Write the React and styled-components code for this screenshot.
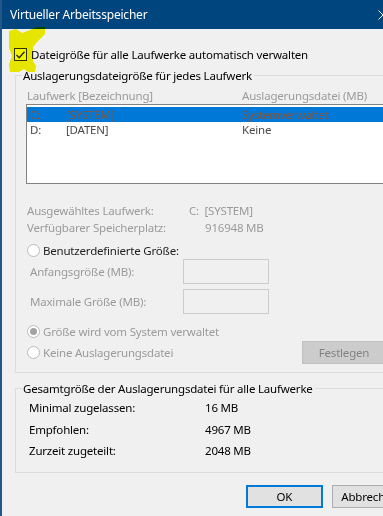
import React from 'react';
import styled, { createGlobalStyle } from 'styled-components';

// Page reset, dialog font
const GlobalStyle = createGlobalStyle`
    html, body {
        margin: 0;
        padding: 0;
        overflow: hidden;
        background: #f0f0f0;
    }
    body {
        font-family: "Noto Sans", "Segoe UI", sans-serif;
        font-size: 11.5px;
        letter-spacing: -0.2px;
    }
`;

const Window = styled.div`
    position: relative;
    width: 418px;
    height: 516px;
    background: #f0f0f0;
    border-left: 2px solid #24568a;
    display: flex;
    flex-direction: column;
    overflow: hidden;
    color: #000;
`;

const TitleBar = styled.div`
    height: 29px;
    flex: none;
    background: #00457d;
    color: #fff;
    display: flex;
    align-items: center;
    padding-left: 8px;
    font-size: 12px;
`;

const Close = styled.span`
    margin-left: auto;
    margin-right: 32px;
    display: flex;
`;

const Content = styled.div`
    padding: 0 12px 0 12px;
    display: flex;
    flex-direction: column;
`;

const CheckRow = styled.label`
    margin-top: 19px;
    height: 13px;
    display: flex;
    align-items: center;
    gap: 4px;
    line-height: 15px;
`;

const Box = styled.span`
    width: 11px;
    height: 11px;
    border: 1px solid #333;
    background: #fff;
    display: flex;
    align-items: center;
    justify-content: center;
`;

const Group = styled.fieldset`
    margin: ${(p) => p.$top}px 0 0 1px;
    padding: 0 0 ${(p) => p.$bottom}px ${(p) => p.$inset}px;
    border: 1px solid #dcdcdc;
    min-width: 0;
`;

const Legend = styled.legend`
    margin-left: ${(p) => 6 - p.$inset}px;
    padding: 0 2px 0 1px;
    line-height: 15px;
`;

const Columns = styled.div`
    padding-top: 5px;
    line-height: 15px;
    display: grid;
    grid-template-columns: 215px 1fr;
    color: #9b9b9b;
`;

const ListBox = styled.div`
    margin: 1px 0 0 -1px;
    height: 76px;
    border: 1px solid #828282;
    background: #fff;
    padding-top: 2px;
`;

const ListRow = styled.div`
    height: 15px;
    line-height: 15px;
    padding-left: 3px;
    display: grid;
    grid-template-columns: 36px 176px 1fr;
    background: ${(p) => (p.$selected ? '#0078d7' : 'transparent')};
    color: ${(p) => (p.$selected ? '#86573a' : '#4a4a4a')};
`;

const InfoBlock = styled.div`
    margin-top: 18px;
    display: grid;
    grid-template-columns: 162px 1fr;
    grid-auto-rows: 17px;
    line-height: 17px;
    color: #9b9b9b;
`;

const Value = styled.span`
    padding-left: ${(p) => p.$indent || 0}px;
`;

const RadioRow = styled.div`
    height: ${(p) => p.$height || 17}px;
    margin-top: ${(p) => p.$top || 0}px;
    display: flex;
    align-items: center;
    gap: 3px;
    color: ${(p) => (p.$enabled ? '#222' : '#9b9b9b')};
`;

const Circle = styled.span`
    width: 11px;
    height: 11px;
    border: 1px solid #bcbcbc;
    border-radius: 50%;
    background: #fff;
    display: flex;
    align-items: center;
    justify-content: center;
    &::after {
        content: '';
        width: 7px;
        height: 7px;
        border-radius: 50%;
        background: ${(p) => (p.$checked ? '#a3a3a3' : 'transparent')};
    }
`;

const SizeRow = styled.div`
    height: 25px;
    margin-top: ${(p) => p.$top || 0}px;
    padding-left: 3px;
    display: grid;
    grid-template-columns: 153px 86px;
    align-items: center;
    color: #9b9b9b;
`;

const SizeInput = styled.span`
    height: 23px;
    border: 1px solid #cccccc;
    background: #f0f0f0;
`;

const SetRow = styled.div`
    display: grid;
    grid-template-columns: 275px 84px;
    align-items: center;
`;

const Button = styled.button`
    width: 84px;
    height: 23px;
    font: inherit;
    letter-spacing: inherit;
    padding: 0;
    border: ${(p) => (p.$default ? '2px solid #0078d7' : '1px solid #adadad')};
    background: #e1e1e1;
    color: #000;
    &:disabled {
        background: #cccccc;
        border-color: #bfbfbf;
        color: #838383;
    }
`;

const TotalRow = styled.div`
    height: 21.5px;
    display: grid;
    grid-template-columns: 176px 1fr;
    align-items: center;
`;

const TotalsTop = styled.div`
    height: 1px;
`;

const ButtonRow = styled.div`
    margin-top: 12px;
    padding-left: 232px;
    display: flex;
    gap: 9px;
`;

// Yellow highlighter mark over the checkbox
const Marker = styled.svg`
    position: absolute;
    left: 0;
    top: 0;
    mix-blend-mode: multiply;
    pointer-events: none;
`;

const drives = [
    { letter: 'C:', label: '[SYSTEM]', size: 'Systemverwaltet', selected: true },
    { letter: 'D:', label: '[DATEN]', size: 'Keine' },
];

const totals = [
    ['Minimal zugelassen:', '16 MB'],
    ['Empfohlen:', '4967 MB'],
    ['Zurzeit zugeteilt:', '2048 MB'],
];

const App = () => {
    return (
        <Window>
            <GlobalStyle />
            <TitleBar>
                Virtueller Arbeitsspeicher
                <Close>
                    <svg width="10" height="10" viewBox="0 0 10 10">
                        <path d="M0.5 0.5 L9.5 9.5 M9.5 0.5 L0.5 9.5" stroke="#fff" strokeWidth="1" />
                    </svg>
                </Close>
            </TitleBar>
            <Content>
                <CheckRow>
                    <Box>
                        <svg width="9" height="8" viewBox="0 0 9 8">
                            <path d="M0.5 4 L3.2 6.8 L8.5 0.8" fill="none" stroke="#2b2b2b" strokeWidth="1.4" />
                        </svg>
                    </Box>
                    Dateigröße für alle Laufwerke automatisch verwalten
                </CheckRow>

                <Group $top={7} $bottom={8} $inset={11}>
                    <Legend $inset={11}>Auslagerungsdateigröße für jedes Laufwerk</Legend>
                    <Columns>
                        <span>Laufwerk [Bezeichnung]</span>
                        <span>Auslagerungsdatei (MB)</span>
                    </Columns>
                    <ListBox>
                        {drives.map((d) => (
                            <ListRow key={d.letter} $selected={d.selected}>
                                <span>{d.letter}</span>
                                <span>{d.label}</span>
                                <span>{d.size}</span>
                            </ListRow>
                        ))}
                    </ListBox>
                    <InfoBlock>
                        <span>Ausgewähltes Laufwerk:</span>
                        <Value>C:&nbsp;&nbsp;[SYSTEM]</Value>
                        <span>Verfügbarer Speicherplatz:</span>
                        <Value $indent={16}>916948 MB</Value>
                    </InfoBlock>
                    <RadioRow $top={6} $enabled>
                        <Circle />
                        Benutzerdefinierte Größe:
                    </RadioRow>
                    <SizeRow>
                        <span>Anfangsgröße (MB):</span>
                        <SizeInput />
                    </SizeRow>
                    <SizeRow $top={5}>
                        <span>Maximale Größe (MB):</span>
                        <SizeInput />
                    </SizeRow>
                    <RadioRow $top={9}>
                        <Circle $checked />
                        Größe wird vom System verwaltet
                    </RadioRow>
                    <SetRow>
                        <RadioRow $height={24}>
                            <Circle />
                            Keine Auslagerungsdatei
                        </RadioRow>
                        <Button disabled>Festlegen</Button>
                    </SetRow>
                </Group>

                <Group $top={8} $bottom={10} $inset={13}>
                    <Legend $inset={13}>Gesamtgröße der Auslagerungsdatei für alle Laufwerke</Legend>
                    <TotalsTop />
                    {totals.map(([label, value]) => (
                        <TotalRow key={label}>
                            <span>{label}</span>
                            <span>{value}</span>
                        </TotalRow>
                    ))}
                </Group>

                <ButtonRow>
                    <Button $default>OK</Button>
                    <Button>Abbrechen</Button>
                </ButtonRow>
            </Content>
            <Marker width="50" height="80" viewBox="0 0 50 80">
                <path
                    d="M7 31 L14 29 L20 33 L28 30 L35 27 L43 27 L43 34 L36 41 L31 47 L31 61 L34 66 L33 72 L26 72 L22 69 L17 72 L8 72 L7 64 L10 56 L7 48 Z"
                    fill="#f4f400"
                />
            </Marker>
        </Window>
    );
};

export default App;
